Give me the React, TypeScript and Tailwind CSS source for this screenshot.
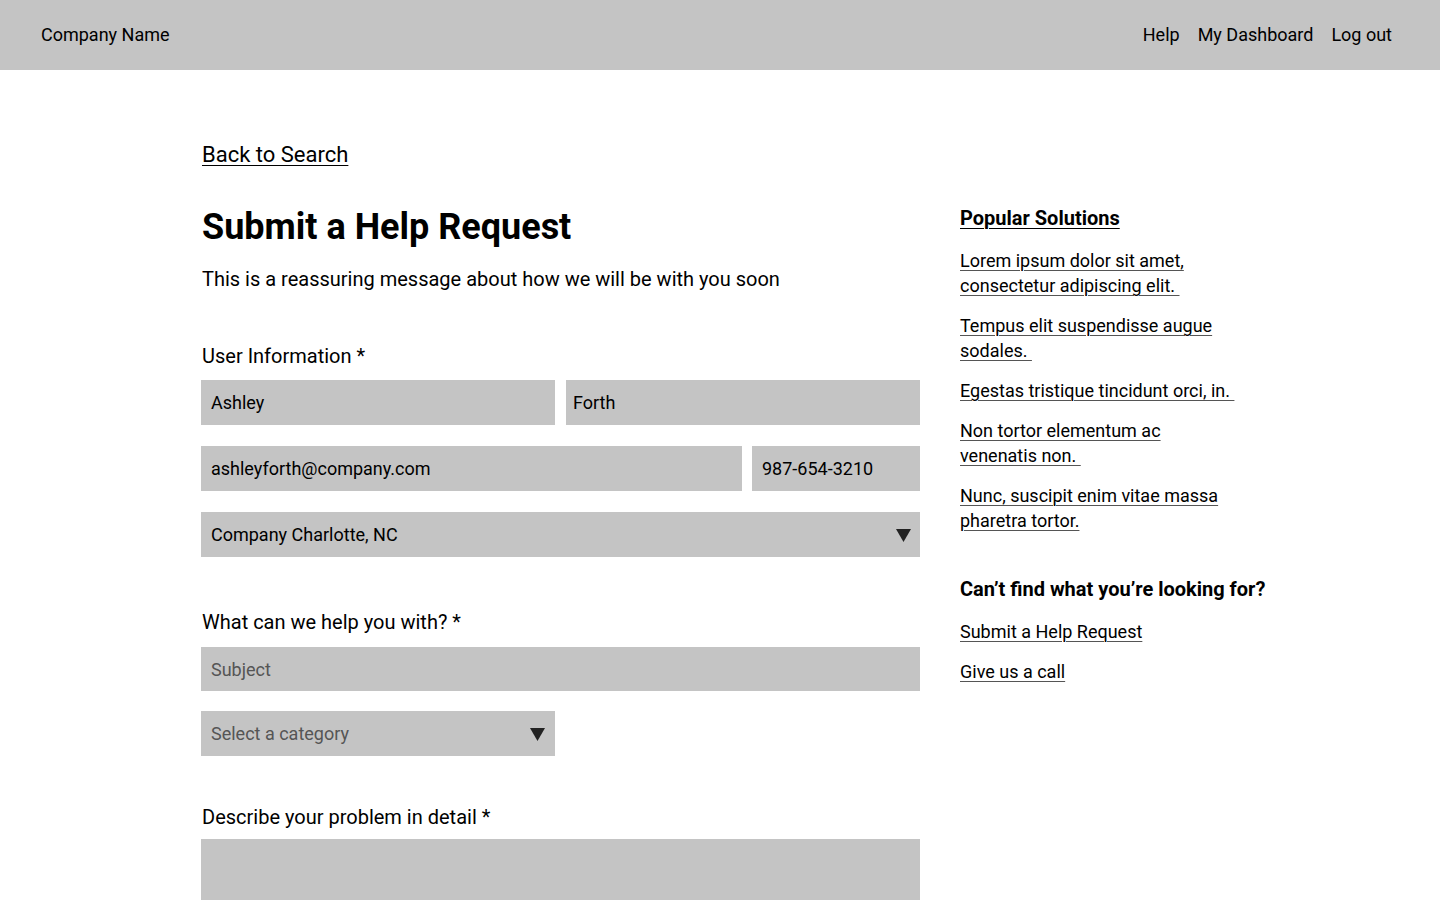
import React from "react";

function Triangle() {
  return (
    <svg width="15" height="13" viewBox="0 0 15 13" className="shrink-0">
      <polygon points="0,0 15,0 7.5,13" fill="#222222" />
    </svg>
  );
}

const links = [
  "Lorem ipsum dolor sit amet, consectetur adipiscing elit.\u00a0",
  "Tempus elit suspendisse augue sodales.\u00a0",
  "Egestas tristique tincidunt orci, in.\u00a0",
  "Non tortor elementum ac venenatis non.\u00a0",
  "Nunc, suscipit enim vitae massa pharetra tortor.",
];

export default function App() {
  return (
    <div className="min-h-[900px] bg-white font-['Roboto',sans-serif] text-black">
      <header className="flex h-[70px] items-center justify-between bg-[#c4c4c4] pb-[2px] pl-[41px] pr-[48px] text-[18px]">
        <div>Company Name</div>
        <nav className="flex gap-[18px]">
          <a>Help</a>
          <a>My Dashboard</a>
          <a>Log out</a>
        </nav>
      </header>

      <main className="pl-[201px]">
        <div className="mt-[72px] pl-[1px] text-[22px] leading-[26px]">
          <a className="underline decoration-1 underline-offset-[3px]">Back to Search</a>
        </div>

        <div className="mt-[37px] flex items-start gap-[40px]">
          <section className="flex w-[719px] flex-col">
            <h1 className="pl-[1px] pt-[1px] text-[36px] font-bold leading-[42px]">Submit a Help Request</h1>
            <p className="mt-[17px] pl-[1px] text-[20px] leading-[28px]">
              This is a reassuring message about how we will be with you soon
            </p>

            <label className="mt-[49px] pl-[1px] text-[20px] leading-[28px]">User Information *</label>
            <div className="mt-[10px] flex gap-[11px]">
              <div className="flex h-[45px] w-[354px] items-center bg-[#c4c4c4] pl-[10px] text-[18px]">Ashley</div>
              <div className="flex h-[45px] flex-1 items-center bg-[#c4c4c4] pl-[7px] text-[18px]">Forth</div>
            </div>
            <div className="mt-[21px] flex gap-[10px]">
              <div className="flex h-[45px] w-[541px] items-center bg-[#c4c4c4] pl-[10px] text-[18px]">
                ashleyforth@company.com
              </div>
              <div className="flex h-[45px] flex-1 items-center bg-[#c4c4c4] pl-[10px] text-[18px]">987-654-3210</div>
            </div>
            <div className="mt-[21px] flex h-[45px] items-center justify-between bg-[#c4c4c4] pl-[10px] pr-[9px] text-[18px]">
              <span>Company Charlotte, NC</span>
              <span className="mt-[2px]">
                <Triangle />
              </span>
            </div>

            <label className="mt-[51px] pl-[1px] text-[20px] leading-[28px]">What can we help you with? *</label>
            <div className="mt-[11px] flex h-[44px] items-center bg-[#c4c4c4] pl-[10px] text-[18px] text-[#555555]">
              Subject
            </div>
            <div className="mt-[20px] flex h-[45px] w-[354px] items-center justify-between bg-[#c4c4c4] pl-[10px] pr-[10px] text-[18px] text-[#555555]">
              <span>Select a category</span>
              <span className="mt-[2px]">
                <Triangle />
              </span>
            </div>

            <label className="mt-[47px] pl-[1px] text-[20px] leading-[28px]">Describe your problem in detail *</label>
            <div className="mt-[8px] h-[120px] bg-[#c4c4c4]" />
          </section>

          <aside className="flex w-[340px] flex-col pt-[1px]">
            <h2 className="text-[20px] font-bold leading-[25px] underline decoration-1 underline-offset-[3px]">
              Popular Solutions
            </h2>
            <ul className="mt-[17px] flex max-w-[280px] flex-col gap-[15px] text-[18px] leading-[25px]">
              {links.map((l) => (
                <li key={l}>
                  <a className="underline decoration-1 underline-offset-[3px] decoration-[#555555]">{l}</a>
                </li>
              ))}
            </ul>
            <h2 className="mt-[44px] text-[20px] font-bold leading-[25px]">Can’t find what you’re looking for?</h2>
            <ul className="mt-[17px] flex flex-col gap-[15px] text-[18px] leading-[25px]">
              <li>
                <a className="underline decoration-1 underline-offset-[3px] decoration-[#555555]">Submit a Help Request</a>
              </li>
              <li>
                <a className="underline decoration-1 underline-offset-[3px] decoration-[#555555]">Give us a call</a>
              </li>
            </ul>
          </aside>
        </div>
      </main>
    </div>
  );
}
